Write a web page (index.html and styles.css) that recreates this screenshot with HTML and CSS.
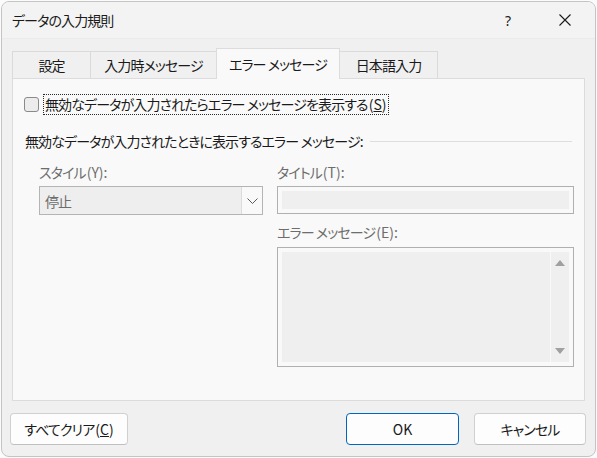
FILE: index.html
```html
<!DOCTYPE html>
<html lang="ja">
<head>
    <meta charset="UTF-8">
    <meta name="viewport" content="width=device-width, initial-scale=1.0">
    <title>データの入力規則</title>
    <link rel="stylesheet" href="styles.css">
</head>
<body>
    <div class="window">
        <div class="titlebar">
            <span class="title">データの入力規則</span>
            <div class="controls">
                <span class="help">?</span>
                <span class="close">
                    <svg width="12" height="12" viewBox="0 0 12 12"><path d="M0.5 0.5 L11.5 11.5 M11.5 0.5 L0.5 11.5" stroke="#1a1a1a" stroke-width="1.1" fill="none"/></svg>
                </span>
            </div>
        </div>

        <div class="content">
            <div class="tabs">
                <div class="tab tab-setting">設定</div>
                <div class="tab tab-input">入力時メッセージ</div>
                <div class="tab tab-error active">エラー&nbsp;メッセージ</div>
                <div class="tab tab-ime">日本語入力</div>
            </div>

            <div class="panel">
                <div class="check-row">
                    <span class="checkbox"></span>
                    <span class="check-label">無効なデータが入力されたらエラー メッセージを表示する<span class="key">(<u>S</u>)</span></span>
                </div>

                <div class="group-title">
                    <span>無効なデータが入力されたときに表示するエラー メッセージ:</span>
                    <span class="group-line"></span>
                </div>

                <div class="fields">
                    <div class="col-left">
                        <div class="label">スタイル<span class="key">(Y):</span></div>
                        <div class="combo">
                            <span class="combo-value">停止</span>
                            <span class="combo-button">
                                <svg width="11" height="6" viewBox="0 0 11 6"><path d="M0.5 0.5 L5.5 5.5 L10.5 0.5" stroke="#5a5a5a" stroke-width="1" fill="none"/></svg>
                            </span>
                        </div>
                    </div>
                    <div class="col-right">
                        <div class="label">タイトル<span class="key">(T):</span></div>
                        <div class="textbox"><div class="textbox-fill"></div></div>
                        <div class="label label-msg">エラー メッセージ<span class="key">(E):</span></div>
                        <div class="textarea">
                            <div class="textarea-fill"></div>
                            <div class="scrollbar">
                                <span class="arrow-up"></span>
                                <span class="arrow-down"></span>
                            </div>
                        </div>
                    </div>
                </div>
            </div>
        </div>

        <div class="footer">
            <button class="btn btn-clear">すべてクリア<span class="key">(<u>C</u>)</span></button>
            <div class="footer-right">
                <button class="btn btn-ok">OK</button>
                <button class="btn btn-cancel">キャンセル</button>
            </div>
        </div>
    </div>
</body>
</html>
```

FILE: styles.css
```css
body {
    margin: 0;
    padding: 1px;
    background-color: #fbfbfb;
    font-family: "Noto Sans CJK JP", "Noto Sans", sans-serif;
    font-feature-settings: "palt";
    letter-spacing: -0.9px;
    color: #1a1a1a;
}

/* access key part like (S), latin glyphs keep normal spacing */
.key {
    letter-spacing: 0;
    margin-left: 1px;
}

.window {
    width: 593px;
    height: 454px;
    background: #f0f0f0;
    border: 1px solid #c4c4c4;
    border-radius: 8px;
    display: flex;
    flex-direction: column;
    overflow: hidden;
}

/* title bar */
.titlebar {
    height: 36px;
    display: flex;
    align-items: center;
    justify-content: space-between;
    padding-left: 10px;
    background: #f3f3f3;
    border-bottom: 1px solid #ebebeb;
}

.title {
    font-size: 14px;
}

.controls {
    display: flex;
    align-items: center;
}

.help {
    width: 46px;
    text-align: center;
    font-family: "Noto Sans", sans-serif;
    font-size: 14px;
    letter-spacing: 0;
    margin-right: 14px;
}

.close {
    width: 40px;
    display: flex;
    justify-content: center;
    margin-right: 10px;
}

/* tabs + panel */
.content {
    padding: 9px 10px 0 10px;
}

.tabs {
    display: flex;
    align-items: flex-end;
    height: 30px;
}

.tab {
    height: 27px;
    display: flex;
    align-items: center;
    justify-content: center;
    font-size: 14px;
    background: #f0f0f0;
    border: 1px solid #dadada;
    border-bottom: none;
    box-sizing: border-box;
}

.tab + .tab {
    margin-left: -1px;
}

.tab-setting { width: 79px; }
.tab-input { width: 127px; }
.tab-error { width: 124px; }
.tab-ime { width: 99px; }

.tab.active {
    height: 31px;
    background: #f9f9f9;
    border-color: #dcdcdc;
    position: relative;
    margin-bottom: -1px;
    z-index: 1;
}

.panel {
    height: 321px;
    background: #f9f9f9;
    border: 1px solid #dcdcdc;
    padding: 0 12px 0 11px;
}

.check-row {
    display: flex;
    align-items: center;
    margin-top: 14px;
    height: 22px;
}

.checkbox {
    width: 13px;
    height: 13px;
    border: 1px solid #8a8a8a;
    border-radius: 3px;
    background: #ececec;
    margin-right: 4px;
}

.check-label {
    font-size: 14px;
    border: 1px dotted #2a2a2a;
    padding: 0 1px;
    line-height: 19px;
}

.group-title {
    display: flex;
    align-items: center;
    margin-top: 16px;
    padding-left: 1px;
    font-size: 14px;
}

.group-line {
    flex: 1;
    height: 1px;
    background: #dedede;
    margin-left: 7px;
}

.fields {
    display: flex;
    margin-top: 11px;
    padding-left: 15px;
}

.col-left {
    width: 224px;
    flex-shrink: 0;
}

.col-right {
    width: 297px;
    flex-shrink: 0;
    margin-left: 14px;
}

.label {
    color: #6d6d6d;
    font-size: 14px;
    height: 20px;
    line-height: 20px;
    margin-bottom: 4px;
}

.label-msg {
    margin-top: 8px;
    margin-bottom: 5px;
}

.combo {
    height: 29px;
    box-sizing: border-box;
    border: 1px solid #b4b4b4;
    background: #eeeeee;
    display: flex;
    align-items: center;
    justify-content: space-between;
    margin-top: 1px;
}

.combo-value {
    color: #6d6d6d;
    font-size: 14px;
    padding-left: 5px;
}

.combo-button {
    width: 20px;
    height: 27px;
    background: #f9f9f9;
    border-left: 1px solid #dcdcdc;
    display: flex;
    align-items: center;
    justify-content: center;
}

.textbox {
    height: 28px;
    box-sizing: border-box;
    border: 1px solid #b0b0b0;
    padding: 4px;
    background: #f9f9f9;
}

.textbox-fill {
    height: 100%;
    background: #efefef;
}

.textarea {
    height: 120px;
    box-sizing: border-box;
    border: 1px solid #b0b0b0;
    padding: 4px;
    background: #f9f9f9;
    display: flex;
}

.textarea-fill {
    flex: 1;
    background: #efefef;
}

.scrollbar {
    width: 18px;
    margin-left: 1px;
    background: #efefef;
    display: flex;
    flex-direction: column;
    justify-content: space-between;
    align-items: center;
    padding: 8px 0 8px 0;
}

.arrow-up {
    width: 0;
    height: 0;
    border-left: 5px solid transparent;
    border-right: 5px solid transparent;
    border-bottom: 6px solid #a0a0a0;
}

.arrow-down {
    width: 0;
    height: 0;
    border-left: 5px solid transparent;
    border-right: 5px solid transparent;
    border-top: 6px solid #a0a0a0;
}

/* buttons row */
.footer {
    display: flex;
    justify-content: space-between;
    padding: 12px 9px 0 8px;
}

.footer-right {
    display: flex;
    gap: 15px;
}

.btn {
    height: 32px;
    font-family: "Noto Sans CJK JP", "Noto Sans", sans-serif;
    font-feature-settings: "palt";
    font-size: 14px;
    letter-spacing: -0.9px;
    color: #1a1a1a;
    background: #fdfdfd;
    border: 1px solid #d0d0d0;
    border-bottom-color: #c0c0c0;
    border-radius: 4px;
    padding: 0;
}

.btn-clear { width: 118px; }
.btn-ok {
    width: 113px;
    border: 1px solid #0067c0;
    letter-spacing: 0;
}
.btn-cancel { width: 112px; }
```
